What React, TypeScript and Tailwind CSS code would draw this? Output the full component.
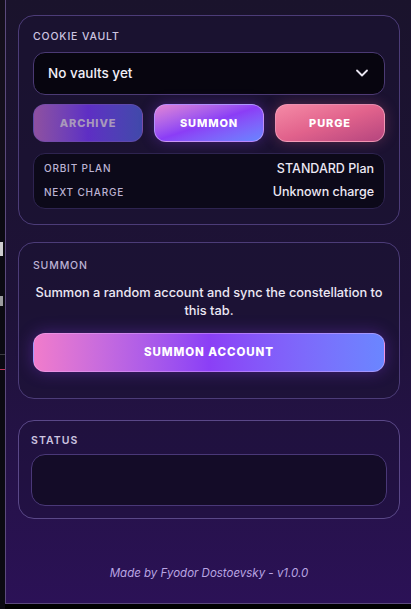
import { ChevronDown } from 'lucide-react'

const font = { fontFamily: 'Inter, "Noto Sans", sans-serif' }

function InfoRow({ label, value }: { label: string; value: string }) {
  return (
    <div className="flex items-center justify-between">
      <span className="text-[10px] font-medium tracking-[0.08em] text-[#bdb3d4]">{label}</span>
      <span className="text-[12.5px] font-medium text-[#ece8f4]">{value}</span>
    </div>
  )
}

export default function App() {
  return (
    <div className="flex h-[609px] w-[411px] overflow-hidden bg-black" style={font}>
      {/* page behind the popup */}
      <div className="flex w-[5px] shrink-0 flex-col bg-[#0b0a12]">
        <div className="h-[180px] bg-[#140f1c]" />
        <div className="mt-[62px] h-[14px] w-[3px] bg-white/80" />
        <div className="mt-[40px] h-[10px] w-[3px] bg-white/60" />
        <div className="mt-[48px] h-px w-full bg-white/20" />
        <div className="mt-[14px] h-px w-full bg-[#c0335a]" />
      </div>

      <div className="flex h-[604px] flex-1 flex-col border-b border-l border-[#5b4a7c] bg-gradient-to-b from-[#1a132c] via-[#1e1238] to-[#2b1156] pl-3 pr-3 pt-[15px]">
        {/* vault card */}
        <section className="flex h-[210px] w-[382px] flex-col rounded-2xl border border-[#4c3c78] bg-[#1a1232]/60 px-[14px] pt-[13px]">
          <h2 className="text-[10.5px] font-medium tracking-[0.08em] text-[#cdc5e0]">COOKIE VAULT</h2>
          <div className="mt-[7px] flex h-[43px] items-center justify-between rounded-xl border border-[#4b3a74] bg-[#07050f] pl-[14px] pr-[12px]">
            <span className="text-[13.5px] font-medium text-[#f2eff8]">No vaults yet</span>
            <ChevronDown size={20} strokeWidth={2.2} className="text-[#e8e4f0]" />
          </div>
          <div className="mt-[9px] grid grid-cols-3 gap-[11px]">
            <button className="h-[38px] rounded-xl border border-[#6e4fa8]/60 bg-gradient-to-r from-[#8f50a0] via-[#5e2ec4] to-[#4049aa] text-[11px] font-extrabold tracking-[0.08em] text-[#a899bb]">
              ARCHIVE
            </button>
            <button className="h-[38px] rounded-xl border border-[#c9a3ff]/70 bg-gradient-to-br from-[#e383d4] via-[#8b3df6] to-[#6585ff] text-[11px] font-extrabold tracking-[0.08em] text-white shadow-[0_0_14px_rgba(139,61,246,0.35)]">
              SUMMON
            </button>
            <button className="h-[38px] rounded-xl border border-[#f7a6c0]/70 bg-gradient-to-br from-[#f58aa6] via-[#e1628c] to-[#b5457e] text-[11px] font-extrabold tracking-[0.08em] text-white shadow-[0_0_14px_rgba(225,98,140,0.3)]">
              PURGE
            </button>
          </div>
          <div className="mt-[11px] flex h-[56px] flex-col justify-center gap-[5px] rounded-xl border border-[#2e2450] bg-[#0c0919] pl-[10px] pr-[10px]">
            <InfoRow label="ORBIT PLAN" value="STANDARD Plan" />
            <InfoRow label="NEXT CHARGE" value="Unknown charge" />
          </div>
        </section>

        {/* summon card */}
        <section className="mt-[17px] flex h-[157px] w-[382px] flex-col rounded-2xl border border-[#4c3c78] bg-[#1a1232]/50 px-[14px] pt-[15px]">
          <h2 className="text-[10.5px] font-medium tracking-[0.08em] text-[#bdb3d4]">SUMMON</h2>
          <p className="mt-[10px] text-center text-[12.8px] leading-[18px] font-medium text-[#ece8f4]">
            Summon a random account and sync the constellation to this tab.
          </p>
          <button className="mt-[13px] h-[39px] w-full rounded-xl border border-[#f3b9ff]/40 bg-gradient-to-r from-[#f17ccb] via-[#8b3ff6] to-[#6a86ff] text-[11.5px] font-extrabold tracking-[0.08em] text-white shadow-[0_0_16px_rgba(139,63,246,0.35)]">
            SUMMON ACCOUNT
          </button>
        </section>

        {/* status card */}
        <section className="mt-[21px] flex h-[99px] w-[382px] flex-col rounded-2xl border border-[#5a4888] bg-[#1c1238]/40 px-[12px] pt-[12px]">
          <h2 className="text-[10.5px] font-semibold tracking-[0.1em] text-[#cdc5e0]">STATUS</h2>
          <div className="mt-[5px] h-[52px] rounded-[14px] border border-[#4a3878] bg-[#120b22]/80" />
        </section>

        <p className="mt-[46px] text-center text-[11.5px] italic text-[#b9a5e2]">
          Made by Fyodor Dostoevsky - v1.0.0
        </p>
      </div>
    </div>
  )
}
